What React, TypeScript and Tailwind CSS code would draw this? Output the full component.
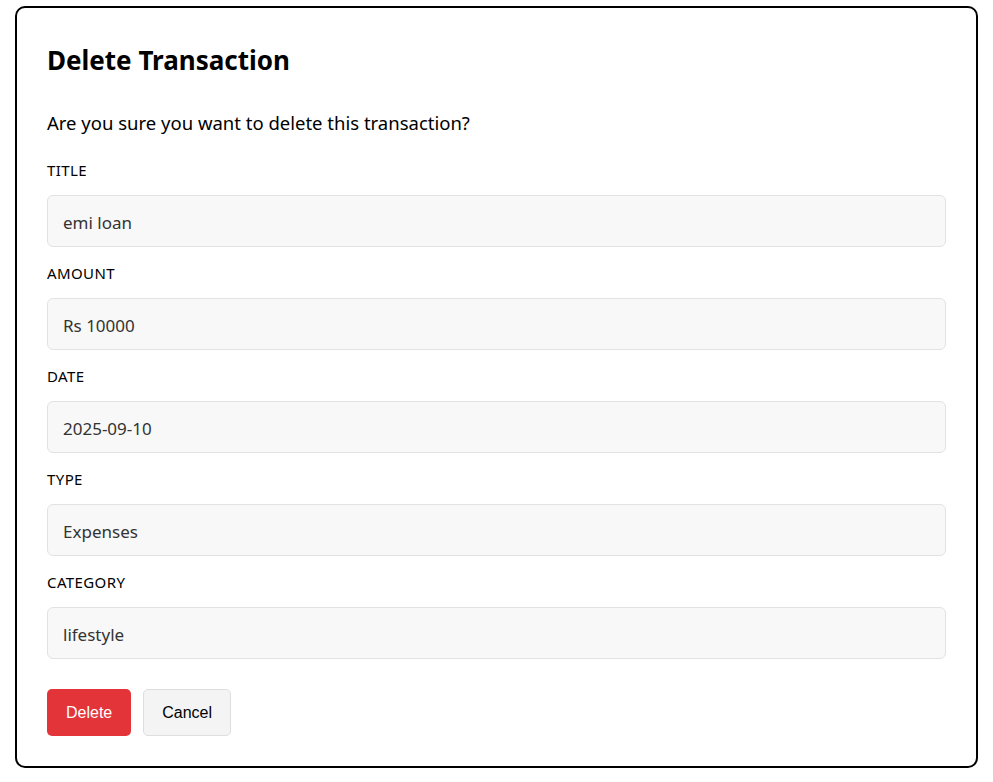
const fields = [
  { label: "TITLE", value: "emi loan" },
  { label: "AMOUNT", value: "Rs 10000" },
  { label: "DATE", value: "2025-09-10" },
  { label: "TYPE", value: "Expenses" },
  { label: "CATEGORY", value: "lifestyle" },
];

export default function App() {
  return (
    <main className="bg-white px-[15px] pt-[6px] pb-[15px] font-['Noto_Sans',sans-serif] text-black">
      <div className="border-2 border-black rounded-[10px] px-[30px] pt-[34px] pb-[30px]">
        <h2 className="text-[26px] font-bold leading-[36px]">Delete Transaction</h2>
        <p className="mt-[32px] text-[18.5px] leading-[26px]">
          Are you sure you want to delete this transaction?
        </p>
        <div className="mt-[19px] flex flex-col gap-[11px]">
          {fields.map((f) => (
            <div key={f.label} className="flex flex-col">
              <label className="text-[15px] tracking-[0.4px] leading-[20px] mt-[5px] mb-[15px]">
                {f.label}
              </label>
              <div className="h-[52px] flex items-center px-[15px] pt-[3px] bg-[#f8f8f8] border border-[#e2e2e2] rounded-[6px] text-[17px] text-[#333]">
                {f.value}
              </div>
            </div>
          ))}
        </div>
        <div className="mt-[30px] flex gap-[12px] font-['Liberation_Sans',Arial,sans-serif] text-[16px]">
          <button className="h-[47px] px-[19px] bg-[#e33539] text-white rounded-[5px]">Delete</button>
          <button className="h-[47px] px-[18px] bg-[#f4f4f4] border border-[#dedede] rounded-[5px] text-black">
            Cancel
          </button>
        </div>
      </div>
    </main>
  );
}
